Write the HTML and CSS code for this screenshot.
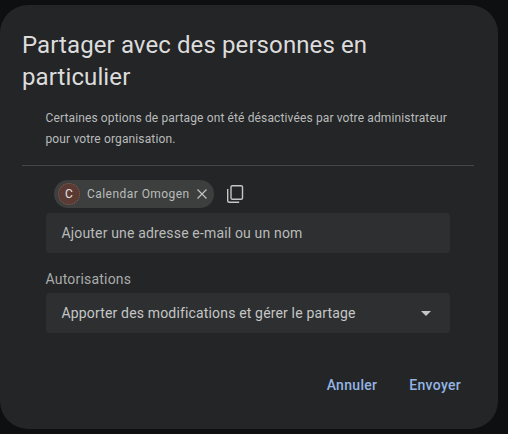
FILE: index.html
```html
<!DOCTYPE html>
<html lang="fr">
<head>
    <meta charset="UTF-8">
    <title>Partager</title>
    <link rel="stylesheet" href="styles.css">
</head>
<body>
    <div class="dialog">
        <h2 class="dialog_title">Partager avec des personnes en particulier</h2>
        <p class="notice">Certaines options de partage ont été désactivées par votre administrateur pour votre organisation.</p>
        <div class="divider"></div>

        <div class="form">
            <div class="chips">
                <div class="chip">
                    <span class="avatar">C</span>
                    <span class="chip_name">Calendar Omogen</span>
                    <svg class="chip_close" width="12" height="12" viewBox="0 0 12 12">
                        <path d="M1.5 1.5l9 9M10.5 1.5l-9 9" fill="none" stroke="#c4c7c5" stroke-width="1.1"/>
                    </svg>
                </div>
                <svg class="copy_icon" width="20" height="20" viewBox="0 0 20 20">
                    <rect x="6" y="1.7" width="11.5" height="13.6" rx="1.4" fill="none" stroke="#c4c7c5" stroke-width="1.4"/>
                    <path d="M2.7 5v11.8c0 .8.6 1.5 1.5 1.5h10" fill="none" stroke="#c4c7c5" stroke-width="1.4"/>
                </svg>
            </div>
            <div class="field field_input">Ajouter une adresse e-mail ou un nom</div>
            <div class="field_label">Autorisations</div>
            <div class="field field_select">
                <span>Apporter des modifications et gérer le partage</span>
                <span class="caret"></span>
            </div>
        </div>

        <div class="actions">
            <span class="action_btn">Annuler</span>
            <span class="action_btn">Envoyer</span>
        </div>
    </div>
</body>
</html>
```

FILE: styles.css
```css
html, body {
    height: 100%;
}

body {
    margin: 0;
    background-color: #0e0f10;
    font-family: "Roboto", "Liberation Sans", sans-serif;
    overflow: hidden;
}

.dialog {
    box-sizing: border-box;
    width: 498px;
    height: 424px;
    margin-top: 5px;
    padding: 24px 24px 0 22px;
    background-color: #242527;
    border-radius: 28px;
    display: flex;
    flex-direction: column;
}

.dialog_title {
    margin: 0;
    font-size: 24px;
    font-weight: 400;
    line-height: 32px;
    letter-spacing: 0.1px;
    color: #dcdcdc;
}

.notice {
    margin: 15px 0 0 23.5px;
    width: 420px;
    font-size: 12px;
    line-height: 21px;
    letter-spacing: 0.13px;
    color: #b9bcbb;
}

.divider {
    height: 1px;
    margin-top: 15px;
    background-color: #444746;
}

.form {
    margin-left: 24px;
    width: 404px;
}

.chips {
    display: flex;
    align-items: center;
    margin-top: 14px;
    padding-left: 8px;
}

.chip {
    display: flex;
    align-items: center;
    box-sizing: border-box;
    width: 160px;
    height: 28px;
    padding: 0 6px 0 4px;
    background-color: #3c3f3e;
    border-radius: 14px;
}

.avatar {
    box-sizing: border-box;
    width: 22px;
    height: 22px;
    border-radius: 50%;
    border: 1px dotted #7d615a;
    background-color: #5a3a32;
    color: #e3e3e3;
    font-size: 12px;
    line-height: 20px;
    text-align: center;
}

.chip_name {
    margin-left: 7px;
    font-size: 12px;
    letter-spacing: 0.45px;
    color: #b9bcbb;
    white-space: nowrap;
}

.chip_close {
    margin-left: auto;
}

.copy_icon {
    margin-left: 11px;
}

.field {
    box-sizing: border-box;
    display: flex;
    align-items: center;
    height: 40px;
    padding: 0 16px 0 15.5px;
    background-color: #2e2f31;
    border-radius: 4px;
    font-size: 14px;
    letter-spacing: 0.16px;
    color: #b9bcbb;
}

.field_input {
    margin-top: 5px;
}

.field_select {
    justify-content: space-between;
    color: #c4c7c5;
}

.field_label {
    margin-top: 17px;
    margin-left: -0.5px;
    height: 23px;
    font-size: 14px;
    line-height: 19px;
    letter-spacing: 0.2px;
    color: #a9acab;
}

.caret {
    width: 0;
    height: 0;
    margin-right: 3px;
    border-left: 5px solid transparent;
    border-right: 5px solid transparent;
    border-top: 5px solid #c4c7c5;
}

.actions {
    display: flex;
    justify-content: flex-end;
    gap: 32px;
    margin-top: 42px;
    padding-right: 13px;
}

.action_btn {
    font-size: 14px;
    font-weight: 500;
    letter-spacing: 0.3px;
    line-height: 20px;
    color: #93b5e4;
}
```
